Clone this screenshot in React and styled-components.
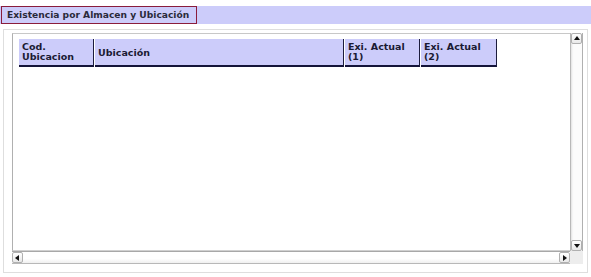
import React from "react";
import styled, { createGlobalStyle } from "styled-components";

const Global = createGlobalStyle`
  html, body { margin: 0; padding: 0; background: #ffffff; }
  body { font-family: "DejaVu Sans", "Liberation Sans", sans-serif; }
`;

const Page = styled.div`
  width: 591px;
  height: 277px;
  padding-top: 6px;
  box-sizing: border-box;
  display: flex;
  flex-direction: column;
`;

const TitleBar = styled.div`
  height: 18px;
  background: #ccccfa;
  display: flex;
  padding-left: 1px;
`;

const TitleBox = styled.div`
  width: 196px;
  height: 18px;
  box-sizing: border-box;
  border: 1px solid #8a1c3c;
  font-weight: bold;
  font-size: 9.15px;
  color: #2a2a3a;
  padding-left: 5px;
  display: flex;
  align-items: center;
  white-space: nowrap;
  overflow: hidden;
`;

const Panel = styled.div`
  margin: 5px 3px 0 3px;
  height: 244px;
  box-sizing: border-box;
  border: 1px solid #dedede;
  padding: 3px 4px 8px 8px;
`;

const ScrollFrame = styled.div`
  height: 100%;
  display: grid;
  grid-template-columns: 1fr 13px;
  grid-template-rows: 1fr 13px;
`;

const Viewport = styled.div`
  border-top: 1px solid #c8c8c8;
  border-left: 1px solid #b0b0b0;
  border-bottom: 1px solid #d0d0d0;
  background: #fff;
  padding: 5px 0 0 6px;
  box-sizing: border-box;
`;

const HeaderRow = styled.div`
  display: flex;
  gap: 1px;
`;

const HeadCell = styled.div`
  width: ${(p) => p.w}px;
  height: 28px;
  box-sizing: border-box;
  background: #ccccfa;
  border-right: 1px solid #1c1c3c;
  border-bottom: 2px solid #14143a;
  font-weight: bold;
  font-size: 9.5px;
  line-height: 10px;
  color: #1a1a33;
  padding: ${(p) => (p.single ? "9px 0 0 3px" : "3px 0 0 3px")};
`;

const VBar = styled.div`
  border-left: 1px solid #b8b8b8;
  border-right: 1px solid #b0b0b0;
  background: #fbfbfb;
  display: flex;
  flex-direction: column;
  justify-content: space-between;
  box-shadow: inset 2px 0 2px -1px #e0e0e0;
`;

const HBar = styled.div`
  border-top: 1px solid #a8a8a8;
  border-bottom: 1px solid #b8b8b8;
  background: linear-gradient(#ffffff, #ffffff 60%, #f0f0f0);
  display: flex;
  justify-content: space-between;
`;

const ArrowBtn = styled.div`
  width: 11px;
  height: 11px;
  box-sizing: border-box;
  border: 1px solid #b0b0b0;
  border-radius: 2px;
  background: linear-gradient(#ffffff, #e8e8e8);
  display: flex;
  align-items: center;
  justify-content: center;
`;

const Corner = styled.div`
  background: #ededed;
`;

const Tri = ({ dir }) => {
  const pts = {
    up: "1,5 4,1 7,5",
    down: "1,2 4,6 7,2",
    left: "5,1 1,4 5,7",
    right: "2,1 6,4 2,7",
  }[dir];
  return (
    <svg width="8" height="8" viewBox="0 0 8 8">
      <polygon points={pts} fill="#111" />
    </svg>
  );
};

export default function App() {
  return (
    <>
      <Global />
      <Page>
        <TitleBar>
          <TitleBox>Existencia por Almacen y Ubicación</TitleBox>
        </TitleBar>
        <Panel>
          <ScrollFrame>
            <Viewport>
              <HeaderRow>
                <HeadCell w={75}>
                  Cod.
                  <br />
                  Ubicacion
                </HeadCell>
                <HeadCell w={249} single>
                  Ubicación
                </HeadCell>
                <HeadCell w={75}>
                  Exi. Actual
                  <br />
                  (1)
                </HeadCell>
                <HeadCell w={76}>
                  Exi. Actual
                  <br />
                  (2)
                </HeadCell>
              </HeaderRow>
            </Viewport>
            <VBar>
              <ArrowBtn>
                <Tri dir="up" />
              </ArrowBtn>
              <ArrowBtn>
                <Tri dir="down" />
              </ArrowBtn>
            </VBar>
            <HBar>
              <ArrowBtn>
                <Tri dir="left" />
              </ArrowBtn>
              <ArrowBtn>
                <Tri dir="right" />
              </ArrowBtn>
            </HBar>
            <Corner />
          </ScrollFrame>
        </Panel>
      </Page>
    </>
  );
}
